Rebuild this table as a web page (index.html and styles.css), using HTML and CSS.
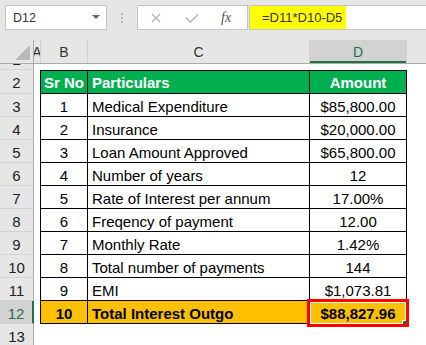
FILE: index.html
```html
<!DOCTYPE html>
<html>
<head>
<meta charset="utf-8">
<link rel="stylesheet" href="styles.css">
</head>
<body>
<div class="app">
  <div class="toolbar">
    <div class="namebox">
      <span>D12</span>
      <svg class="caret" width="8" height="4" viewBox="0 0 8 4"><path d="M0 0H8L4 4Z" fill="#666"/></svg>
    </div>
    <div class="grip"><i></i><i></i><i></i></div>
    <div class="fbtns">
      <svg class="ico-x" width="10" height="10" viewBox="0 0 10 10"><path d="M1 1L9 9M9 1L1 9" stroke="#b3b3b3" stroke-width="1.3" fill="none"/></svg>
      <svg class="ico-ok" width="14" height="10" viewBox="0 0 14 10"><path d="M1 4.5L5.5 9L13 1.5" stroke="#b3b3b3" stroke-width="1.4" fill="none"/></svg>
      <span class="fx">fx</span>
    </div>
    <div class="fbox"><span class="formula">=D11*D10-D5</span></div>
  </div>

  <div class="colhead">
    <div class="corner"><svg width="15" height="15" viewBox="0 0 15 15"><path d="M15 0V15H0Z" fill="#b9b9b9"/></svg></div>
    <div class="ch cha"><span>A</span></div>
    <div class="ch chb">B</div>
    <div class="ch chc">C</div>
    <div class="ch chd sel">D</div>
    <div class="ch chrest"></div>
  </div>

  <div class="sheet">
    <div class="row r1"><div class="rh"><span>1</span></div></div>
    <div class="row r2"><div class="rh">2</div><div class="ca"></div><div class="c cb hd">Sr No</div><div class="c cc hd">Particulars</div><div class="c cd hd">Amount</div></div>
    <div class="row"><div class="rh">3</div><div class="ca"></div><div class="c cb">1</div><div class="c cc">Medical Expenditure</div><div class="c cd">$85,800.00</div></div>
    <div class="row"><div class="rh">4</div><div class="ca"></div><div class="c cb">2</div><div class="c cc">Insurance</div><div class="c cd">$20,000.00</div></div>
    <div class="row"><div class="rh">5</div><div class="ca"></div><div class="c cb">3</div><div class="c cc">Loan Amount Approved</div><div class="c cd">$65,800.00</div></div>
    <div class="row"><div class="rh">6</div><div class="ca"></div><div class="c cb">4</div><div class="c cc">Number of years</div><div class="c cd">12</div></div>
    <div class="row"><div class="rh">7</div><div class="ca"></div><div class="c cb">5</div><div class="c cc">Rate of Interest per annum</div><div class="c cd">17.00%</div></div>
    <div class="row"><div class="rh">8</div><div class="ca"></div><div class="c cb">6</div><div class="c cc">Freqency of payment</div><div class="c cd">12.00</div></div>
    <div class="row"><div class="rh">9</div><div class="ca"></div><div class="c cb">7</div><div class="c cc">Monthly Rate</div><div class="c cd">1.42%</div></div>
    <div class="row"><div class="rh">10</div><div class="ca"></div><div class="c cb">8</div><div class="c cc">Total number of payments</div><div class="c cd">144</div></div>
    <div class="row"><div class="rh">11</div><div class="ca"></div><div class="c cb">9</div><div class="c cc">EMI</div><div class="c cd">$1,073.81</div></div>
    <div class="row r12"><div class="rh">12</div><div class="ca"></div><div class="c cb">10</div><div class="c cc">Total Interest Outgo</div><div class="c cd active">$88,827.96<span class="selbox"><span class="handle"></span></span></div></div>
    <div class="row r13"><div class="rh">13</div></div>
  </div>
</div>
</body>
</html>
```

FILE: styles.css
```css
html, body {
  margin: 0;
  padding: 0;
}
body {
  width: 426px;
  height: 345px;
  overflow: hidden;
  background: #ffffff;
  font-family: "Liberation Sans", Arial, sans-serif;
}
.app {
  width: 426px;
}

/* toolbar */
.toolbar {
  display: flex;
  align-items: flex-start;
  height: 40px;
  box-sizing: border-box;
  padding: 5px 0 0 5px;
  background: #e6e6e6;
}
.namebox {
  width: 102px;
  height: 25px;
  box-sizing: border-box;
  background: #fff;
  border: 1px solid #c6c6c6;
  display: flex;
  align-items: center;
  justify-content: space-between;
  padding: 0 6px 0 7px;
  font-size: 12.5px;
  color: #333;
}
.caret {
  display: block;
  margin-top: -2px;
}
.grip {
  width: 30px;
  height: 25px;
  display: flex;
  flex-direction: column;
  align-items: center;
  justify-content: center;
  gap: 2px;
}
.grip i {
  display: block;
  width: 2px;
  height: 2px;
  background: #b5b5b5;
}
.fbtns {
  width: 111px;
  height: 25px;
  box-sizing: border-box;
  background: #fff;
  border: 1px solid #c6c6c6;
  display: flex;
  align-items: center;
  padding-left: 13px;
}
.ico-x {
  display: block;
}
.ico-ok {
  display: block;
  margin-left: 24px;
  margin-top: 1px;
}
.fx {
  margin-left: 22px;
  font-family: "Liberation Serif", "Times New Roman", serif;
  font-style: italic;
  font-size: 14px;
  color: #555;
}
.fbox {
  flex: 1;
  height: 25px;
  box-sizing: border-box;
  background: #fff;
  border: 1px solid #c6c6c6;
  border-right: none;
  margin-left: 1px;
}
.formula {
  display: inline-block;
  width: 96px;
  height: 100%;
  box-sizing: border-box;
  padding-left: 12px;
  background: #ffff00;
  font-size: 13px;
  line-height: 23px;
  color: #333;
}

/* column header */
.colhead {
  display: flex;
  height: 24px;
  box-sizing: border-box;
  background: #e6e6e6;
  border-bottom: 1px solid #ababab;
}
.corner {
  width: 34px;
  box-sizing: border-box;
  border-right: 1px solid #ababab;
  display: flex;
  justify-content: flex-end;
  align-items: flex-end;
  padding: 0 3px 3px 0;
}
.corner svg {
  display: block;
}
.ch {
  box-sizing: border-box;
  border-right: 1px solid #d0d0d0;
  display: flex;
  align-items: center;
  justify-content: center;
  font-size: 14px;
  color: #333;
  overflow: hidden;
  white-space: nowrap;
}
.cha { width: 7px; }
.chb { width: 47px; }
.chc { width: 222px; }
.chd { width: 97px; }
.chrest { flex: 1; border-right: none; }
.ch.sel {
  background: #d2d2d2;
  color: #217346;
  box-shadow: inset 0 -2px 0 #217346;
}

/* sheet */
.row {
  display: flex;
  height: 23px;
}
.rh {
  width: 34px;
  flex: none;
  box-sizing: border-box;
  background: #e6e6e6;
  border-right: 1px solid #ababab;
  border-bottom: 1px solid #d4d4d4;
  text-align: center;
  font-size: 15px;
  line-height: 19px;
  padding-top: 3px;
  color: #222;
  overflow: hidden;
}
.ca {
  width: 6px;
  flex: none;
}
.c {
  flex: none;
  box-sizing: border-box;
  border-right: 1px solid #000;
  border-bottom: 1px solid #000;
  font-size: 15px;
  line-height: 19px;
  padding-top: 3px;
  color: #000;
  white-space: nowrap;
}
.cb {
  width: 48px;
  border-left: 1px solid #000;
  text-align: center;
}
.cc {
  width: 222px;
  padding-left: 4px;
}
.cd {
  width: 97px;
  text-align: center;
}
.r1 {
  height: 6px;
}
.r1 .rh {
  padding-top: 0;
}
.r1 .rh span {
  display: block;
  margin-top: -12px;
  font-family: "Liberation Mono", monospace;
}
.r2 {
  height: 24px;
}
.r2 .c {
  border-top: 1px solid #000;
  padding-top: 2px;
}
.hd {
  background: #00b050;
  color: #fff;
  font-weight: bold;
}
.r12 .c {
  background: #ffc000;
  font-weight: bold;
}
.r12 .rh {
  background: #d2d2d2;
  color: #217346;
  border-right: 2px solid #217346;
}
.active {
  position: relative;
}
.selbox {
  position: absolute;
  top: -2px;
  left: -3px;
  right: -3px;
  bottom: -4px;
  border: 3px solid #ff0000;
  box-shadow: inset 0 0 0 1px #ffffff;
}
.handle {
  position: absolute;
  right: 0;
  bottom: 0;
  width: 3px;
  height: 3px;
  background: #217346;
  border-left: 1px solid #fff;
  border-top: 1px solid #fff;
}
```
